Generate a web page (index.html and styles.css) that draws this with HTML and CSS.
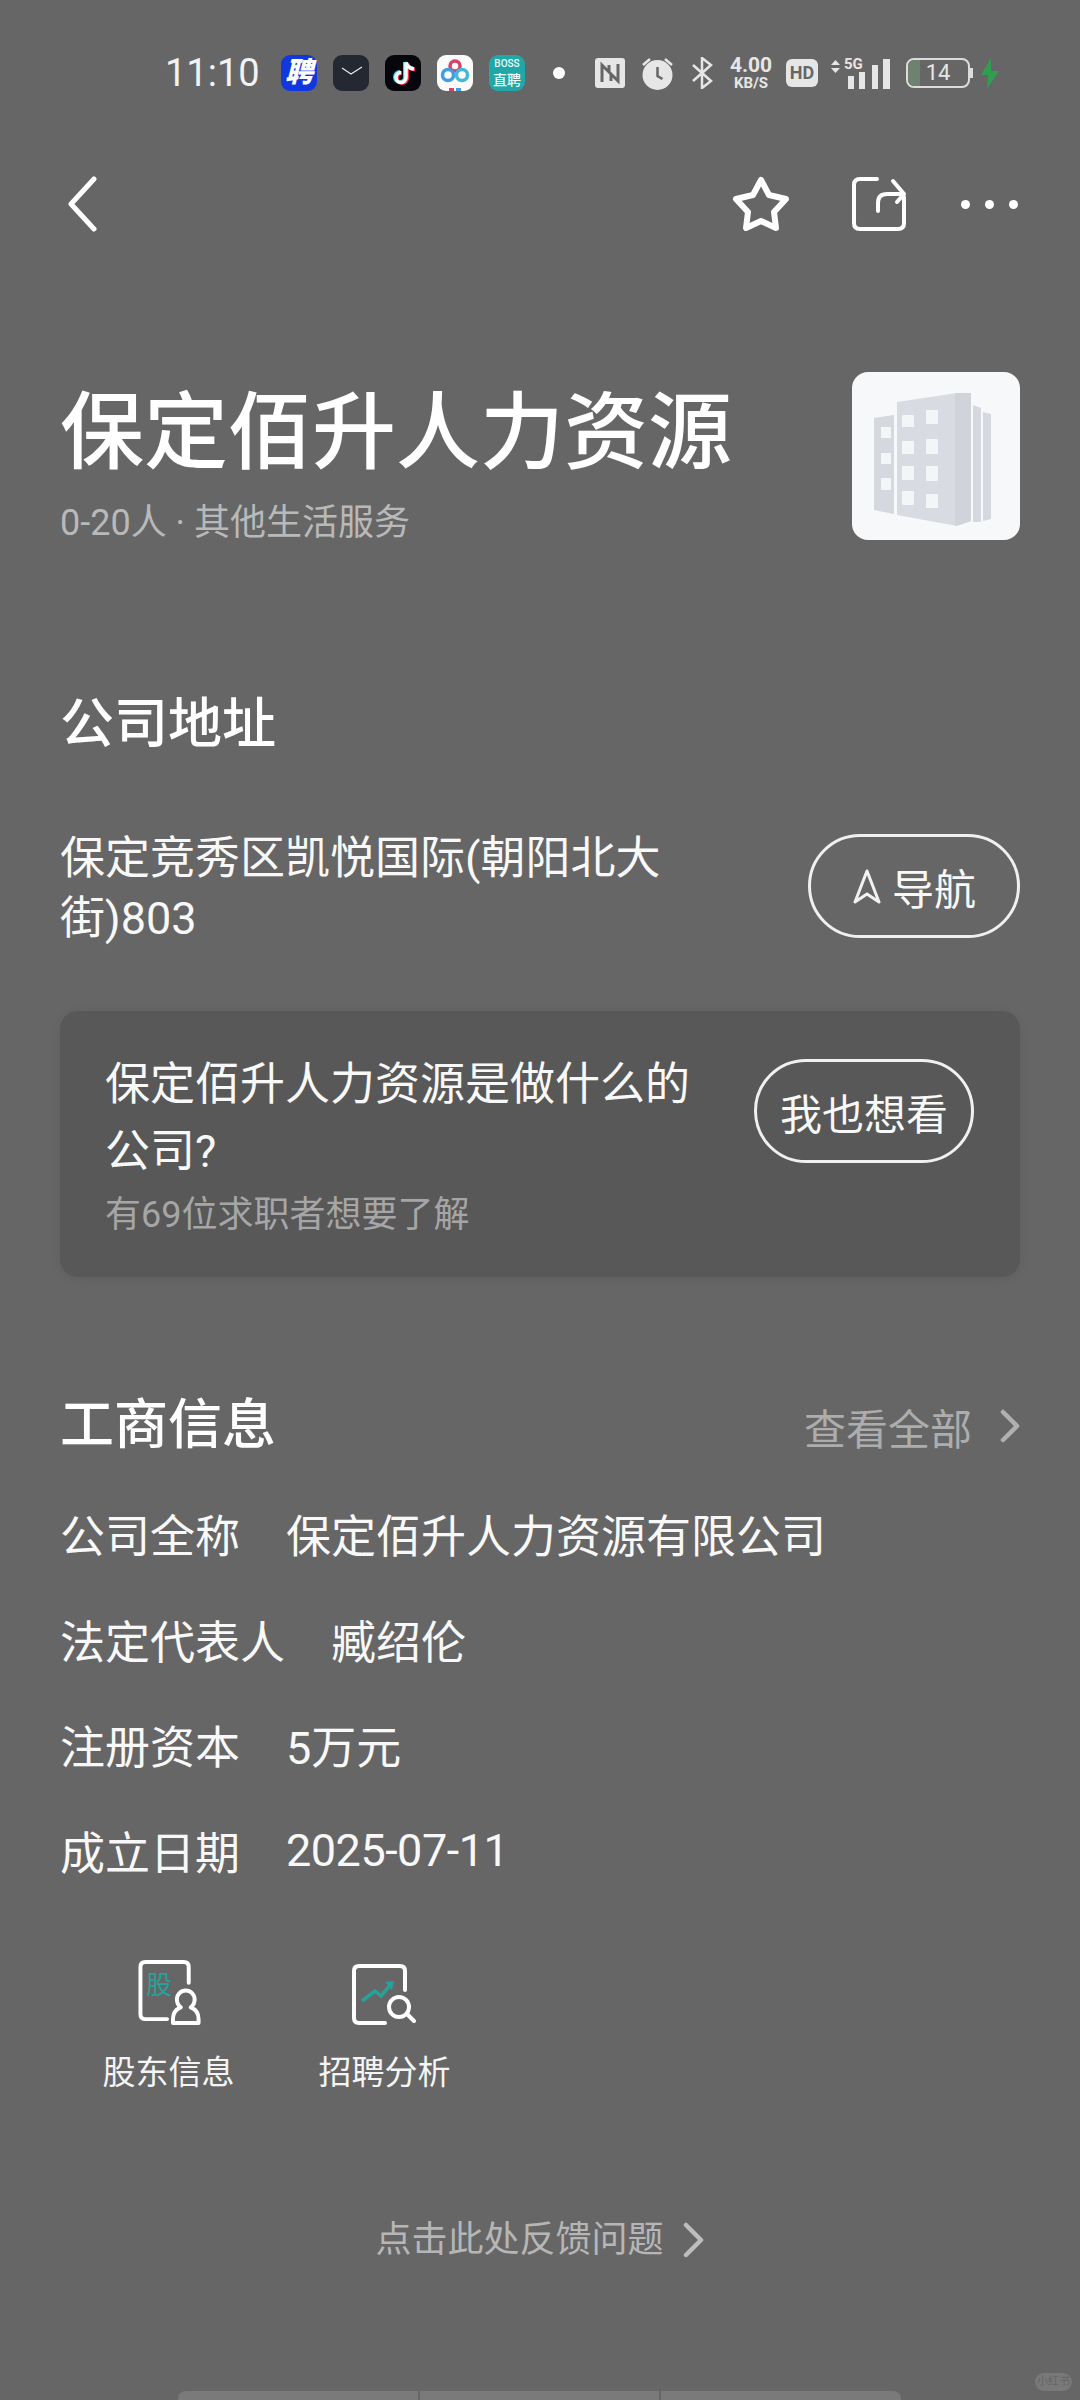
FILE: index.html
```html
<!DOCTYPE html>
<html lang="zh-CN">
<head>
    <meta charset="UTF-8">
    <meta name="viewport" content="width=device-width, initial-scale=1.0">
    <title>保定佰升人力资源</title>
    <link rel="stylesheet" href="styles.css">
</head>
<body>
    <div class="page">
        <div class="status-bar">
            <span class="clock">11:10</span>
            <span class="app app-pin">聘</span>
            <span class="app app-watch">
                <svg viewBox="0 0 36 36" width="36" height="36"><path d="M9 13l9 6 11-7" fill="none" stroke="#e8e8e8" stroke-width="1.2"/></svg>
            </span>
            <span class="app app-tiktok">
                <svg viewBox="0 0 36 36" width="36" height="36">
                    <path d="M20 7v15a5 5 0 1 1-5-5M20 7c1 4 4 6 8 6.500" fill="none" stroke="#25e0e0" stroke-width="4"/>
                    <path d="M22 8v15a5 5 0 1 1-5-5M22 8c1 4 4 6 8 6.500" fill="none" stroke="#f0305a" stroke-width="4"/>
                    <path d="M21 7.500v15a5 5 0 1 1-5-5M21 7.500c1 4 4 6 8 6.500" fill="none" stroke="#fff" stroke-width="3.500"/>
                </svg>
            </span>
            <span class="app app-cloud">
                <svg viewBox="0 0 36 36" width="36" height="36">
                    <circle cx="18" cy="11" r="5" fill="none" stroke="#d9406a" stroke-width="3.500"/>
                    <circle cx="11" cy="20" r="5.500" fill="none" stroke="#3f9de0" stroke-width="3.500"/>
                    <circle cx="25" cy="20" r="5.500" fill="none" stroke="#45b8d8" stroke-width="3.500"/>
                    <rect x="12" y="33" width="5" height="3" fill="#d9406a"/>
                    <rect x="19" y="33" width="5" height="3" fill="#3f9de0"/>
                </svg>
            </span>
            <span class="app app-boss"><b>BOSS</b><b class="boss-cn">直聘</b></span>
            <span class="status-dot"></span>
            <svg class="st-nfc" viewBox="0 0 30 30" width="30" height="30">
                <rect width="30" height="30" rx="3" fill="#e6e6e6"/>
                <path d="M7 24V7l9 9v7M23 6v17l-9-9V7" fill="none" stroke="#666" stroke-width="3"/>
            </svg>
            <svg class="st-alarm" viewBox="0 0 31 33" width="31" height="33">
                <circle cx="15.500" cy="18" r="15" fill="#e6e6e6"/>
                <path d="M15.500 10v9l5 3" fill="none" stroke="#666" stroke-width="2.500"/>
                <path d="M1 8l7-6M30 8l-7-6" stroke="#e6e6e6" stroke-width="2.500"/>
            </svg>
            <svg class="st-bt" viewBox="0 0 21 32" width="21" height="32">
                <path d="M1 8l18 16-9 7V1l9 7L1 24" fill="none" stroke="#e6e6e6" stroke-width="2.500"/>
            </svg>
            <span class="st-speed"><span class="speed-num">4.00</span><span class="speed-unit">KB/S</span></span>
            <span class="st-hd">HD</span>
            <span class="st-signal">
                <svg viewBox="0 0 60 31" width="60" height="31">
                    <path d="M1 7l4.500-5L10 7zM1 10l4.500 5L10 10z" fill="#e6e6e6"/>
                    <rect x="18" y="18" width="6" height="13" fill="#e6e6e6"/>
                    <rect x="29" y="14" width="6" height="17" fill="#e6e6e6"/>
                    <rect x="42" y="7" width="6" height="24" fill="#e6e6e6"/>
                    <rect x="53" y="1" width="7" height="30" fill="#e6e6e6"/>
                </svg>
                <span class="net-label">5G</span>
            </span>
            <span class="st-battery"><span class="battery-level"></span><span class="battery-num">14</span></span>
            <span class="battery-tip"></span>
            <svg class="st-bolt" viewBox="0 0 20 31" width="20" height="31">
                <path d="M11 0L1 17h7l-1 14 12-18h-8z" fill="#2f9e4f"/>
            </svg>
        </div>

        <div class="nav">
            <svg viewBox="0 0 30 56" width="30" height="56">
                <path d="M27 3L4 28l23 25" fill="none" stroke="#fff" stroke-width="5" stroke-linecap="round" stroke-linejoin="round"/>
            </svg>
            <div class="nav-right">
                <svg viewBox="0 0 62 58" width="62" height="58">
                    <path d="M31 5l8 15 17 4-12 13 2 16-15-7-15 7 2-16L6 24l17-4z" fill="none" stroke="#fff" stroke-width="6" stroke-linejoin="round"/>
                </svg>
                <svg class="nav-share" viewBox="0 0 56 56" width="56" height="56">
                    <path d="M26 3H9Q3 3 3 9v38q0 6 6 6h38q6 0 6-6V21" fill="none" stroke="#fff" stroke-width="4" stroke-linecap="round"/>
                    <path d="M27 35v-8q0-9 9-9h16M42 5l11 13-7 8" fill="none" stroke="#fff" stroke-width="4" stroke-linecap="round" stroke-linejoin="round"/>
                </svg>
                <div class="nav-dots"><i></i><i></i><i></i></div>
            </div>
        </div>

        <div class="company-head">
            <div>
                <h1 class="company-name">保定佰升人力资源</h1>
                <div class="company-meta">0-20人 · 其他生活服务</div>
            </div>
            <div class="company-logo">
                <svg viewBox="0 0 168 168" width="168" height="168">
                    <path d="M22 46l20-3v99l-20-4z" fill="#d5d8df"/>
                    <path d="M45 30l60-9h14v128l-14 5-60-11z" fill="#d8dbe2"/>
                    <path d="M103 21h16v128l-16 5z" fill="#d0d3da"/>
                    <path d="M121 33l8 3v114h-8zM131 40l8 2v105l-8 2z" fill="#d5d8df"/>
                    <g fill="#f4f5f7">
                        <rect x="50" y="43" width="12" height="12"/>
                        <rect x="74" y="38" width="12" height="14"/>
                        <rect x="50" y="69" width="12" height="13"/>
                        <rect x="74" y="67" width="12" height="15"/>
                        <rect x="50" y="94" width="12" height="14"/>
                        <rect x="74" y="94" width="12" height="15"/>
                        <rect x="50" y="119" width="12" height="14"/>
                        <rect x="74" y="122" width="12" height="14"/>
                        <rect x="29" y="55" width="10" height="11"/>
                        <rect x="29" y="81" width="10" height="11"/>
                        <rect x="29" y="106" width="10" height="12"/>
                    </g>
                </svg>
            </div>
        </div>

        <h2 class="section-title section-address">公司地址</h2>
        <div class="address-row">
            <div class="address-text">保定竞秀区凯悦国际(朝阳北大街)803</div>
            <div class="pill-btn nav-btn">
                <svg viewBox="0 0 30 37" width="30" height="37">
                    <path d="M15 3l12 31-12-8-12 8z" fill="none" stroke="#f2f2f2" stroke-width="3" stroke-linejoin="round"/>
                </svg>
                导航
            </div>
        </div>

        <div class="ask-card">
            <div class="ask-body">
                <div class="ask-title">保定佰升人力资源是做什么的公司?</div>
                <div class="ask-sub">有69位求职者想要了解</div>
            </div>
            <div class="pill-btn ask-btn">我也想看</div>
        </div>

        <div class="biz-head">
            <h2 class="section-title">工商信息</h2>
            <div class="view-all">
                查看全部
                <svg viewBox="0 0 20 34" width="20" height="34">
                    <path d="M3 3l14 14L3 31" fill="none" stroke="#b0b0b0" stroke-width="4.500" stroke-linecap="round" stroke-linejoin="round"/>
                </svg>
            </div>
        </div>
        <div class="biz-list">
            <div class="biz-row"><span>公司全称</span><span>保定佰升人力资源有限公司</span></div>
            <div class="biz-row"><span>法定代表人</span><span>臧绍伦</span></div>
            <div class="biz-row"><span>注册资本</span><span>5万元</span></div>
            <div class="biz-row"><span>成立日期</span><span class="biz-date">2025-07-11</span></div>
        </div>

        <div class="tools">
            <div class="tool">
                <svg class="tool-icon-left" viewBox="0 0 64 67" width="64" height="67">
                    <path d="M51 23V7q0-5-5-5H7Q2 2 2 7v48q0 5 5 5h22" fill="none" stroke="#fff" stroke-width="4" stroke-linecap="round"/>
                    <text x="8" y="35" class="tool-glyph">股</text>
                    <path d="M35 64v-4q0-9 8-12-4-3-4-8a9 9 0 0 1 18 0q0 5-4 8 8 3 8 12v4z" fill="none" stroke="#fff" stroke-width="4" stroke-linejoin="round"/>
                </svg>
                <span class="tool-label">股东信息</span>
            </div>
            <div class="tool tool-shift">
                <svg viewBox="0 0 64 62" width="64" height="62">
                    <path d="M53 26V7q0-5-5-5H7Q2 2 2 7v47q0 5 5 5h26" fill="none" stroke="#fff" stroke-width="4" stroke-linecap="round"/>
                    <path d="M10 37l13-10 6 5 11-13" fill="none" stroke="#25a39a" stroke-width="3.500"/>
                    <path d="M33 18l9-1-2 9z" fill="#25a39a"/>
                    <circle cx="47" cy="43" r="10" fill="none" stroke="#fff" stroke-width="4"/>
                    <path d="M55 50l7 7" stroke="#fff" stroke-width="4" stroke-linecap="round"/>
                </svg>
                <span class="tool-label">招聘分析</span>
            </div>
        </div>

        <div class="feedback">
            点击此处反馈问题
            <svg viewBox="0 0 22 36" width="22" height="36">
                <path d="M3 3l15 15L3 33" fill="none" stroke="#bdbdbd" stroke-width="4.500" stroke-linecap="round" stroke-linejoin="round"/>
            </svg>
        </div>

        <!-- 底部露出的标签条和水印 -->
        <div class="bottom-tabs"><i></i><i></i><i></i></div>
        <div class="watermark">小红书</div>
    </div>
</body>
</html>
```

FILE: styles.css
```css
* {
    box-sizing: border-box;
}
body {
    margin: 0;
    background: #666666;
    font-family: Roboto, "Noto Sans CJK SC", sans-serif;
    color: #f8f8f8;
}
.page {
    position: relative;
    width: 1080px;
    height: 2400px;
    overflow: hidden;
    padding: 55px 60px 0;
}

/* status bar */
.status-bar {
    display: flex;
    align-items: center;
    height: 36px;
    margin: 0 -60px;
    padding-left: 165px;
    color: #e6e6e6;
}
.clock {
    width: 116px;
    font-size: 38px;
    color: #f2f2f2;
}
.app {
    display: flex;
    flex-direction: column;
    align-items: center;
    justify-content: center;
    width: 36px;
    height: 36px;
    margin-right: 16px;
    border-radius: 9px;
    flex-shrink: 0;
}
.app svg {
    border-radius: 9px;
}
.app-pin {
    background: #1038de;
    color: #fff;
    font-size: 28px;
    font-weight: 900;
    font-style: italic;
    line-height: 36px;
}
.app-watch {
    background: #232832;
}
.app-tiktok {
    background: #05070c;
}
.app-cloud {
    background: #fbfbfb;
}
.app-boss {
    margin-right: 0;
    background: #20a8a8;
    color: #eafafa;
    font-size: 10px;
}
.app-boss b {
    font-weight: 500;
}
.app-boss .boss-cn {
    font-size: 14px;
}
.status-dot {
    width: 12px;
    height: 12px;
    margin-left: 28px;
    border-radius: 50%;
    background: #fff;
}
.st-nfc {
    margin-left: 30px;
}
.st-alarm {
    margin-left: 17px;
}
.st-bt {
    margin-left: 19px;
}
.st-speed {
    display: flex;
    flex-direction: column;
    align-items: center;
    width: 52px;
    margin-left: 12px;
    font-weight: 700;
}
.speed-num {
    font-size: 21px;
    line-height: 19px;
}
.speed-unit {
    font-size: 15px;
    line-height: 16px;
}
.st-hd {
    width: 32px;
    height: 28px;
    margin-left: 9px;
    border-radius: 6px;
    background: #e6e6e6;
    color: #666;
    font-size: 18px;
    font-weight: 700;
    line-height: 28px;
    text-align: center;
}
.st-signal {
    position: relative;
    width: 60px;
    height: 31px;
    margin-left: 12px;
}
.net-label {
    position: absolute;
    left: 14px;
    top: -3px;
    font-size: 15px;
    font-weight: 700;
    line-height: 18px;
}
.st-battery {
    position: relative;
    width: 64px;
    height: 30px;
    margin-left: 16px;
    border: 2px solid #dcdcdc;
    border-radius: 8px;
    text-align: center;
    overflow: hidden;
}
.battery-level {
    position: absolute;
    left: 0;
    top: 0;
    bottom: 0;
    width: 12px;
    background: #6f8270;
}
.battery-num {
    position: relative;
    display: block;
    font-size: 22px;
    line-height: 26px;
}
.battery-tip {
    width: 3px;
    height: 10px;
    background: #dcdcdc;
}
.st-bolt {
    margin-left: 7px;
}

/* top nav */
.nav {
    display: flex;
    justify-content: space-between;
    align-items: center;
    height: 60px;
    margin-top: 83px;
    padding: 0 2px 0 7px;
}
.nav-right {
    display: flex;
    align-items: center;
}
.nav-share {
    margin-left: 59px;
}
.nav-dots {
    display: flex;
    gap: 15px;
    margin-left: 54px;
}
.nav-dots i {
    width: 9px;
    height: 9px;
    border-radius: 50%;
    background: #fff;
}

/* company header */
.company-head {
    display: flex;
    justify-content: space-between;
    margin-top: 138px;
}
.company-name {
    margin: 0;
    padding-top: 4px;
    font-size: 84px;
    font-weight: 500;
    line-height: 116px;
    color: #fff;
}
.company-meta {
    padding-top: 2px;
    font-size: 36px;
    line-height: 58px;
    color: #b9b9b9;
}
.company-logo {
    width: 168px;
    height: 168px;
    border-radius: 16px;
    background: #f7f8f9;
    overflow: hidden;
}

.section-title {
    margin: 0;
    font-size: 54px;
    font-weight: 500;
    line-height: 70px;
    color: #fff;
}
.section-address {
    margin-top: 138px;
}

/* address */
.address-row {
    display: flex;
    justify-content: space-between;
    align-items: center;
    margin-top: 69px;
}
.address-text {
    width: 640px;
    font-size: 45px;
    line-height: 60px;
}
.pill-btn {
    display: flex;
    align-items: center;
    justify-content: center;
    height: 104px;
    border: 3px solid #f0f0f0;
    border-radius: 52px;
    font-size: 42px;
    color: #f8f8f8;
    flex-shrink: 0;
}
.nav-btn {
    gap: 10px;
    width: 212px;
    margin-bottom: 6px;
}

/* ask card */
.ask-card {
    display: flex;
    justify-content: space-between;
    align-items: flex-start;
    height: 266px;
    margin-top: 62px;
    padding: 40px 46px 37px 45px;
    border-radius: 18px;
    background: #585858;
    box-shadow: 0 2px 10px rgba(0, 0, 0, 0.08);
}
.ask-body {
    width: 600px;
}
.ask-title {
    font-size: 45px;
    line-height: 67px;
}
.ask-sub {
    margin-top: 5px;
    font-size: 36px;
    line-height: 50px;
    color: #a6a6a6;
}
.ask-btn {
    width: 220px;
    margin-top: 8px;
}

/* business info */
.biz-head {
    display: flex;
    justify-content: space-between;
    align-items: center;
    margin-top: 114px;
}
.view-all {
    display: flex;
    align-items: center;
    gap: 28px;
    font-size: 42px;
    color: #adadad;
}
.biz-list {
    margin-top: 20px;
}
.biz-row {
    display: flex;
    align-items: center;
    gap: 46px;
    height: 105.500px;
    font-size: 45px;
}
.biz-date {
    letter-spacing: -0.5px;
}

/* tools */
.tools {
    display: flex;
    margin-top: 57px;
}
.tool {
    display: flex;
    flex-direction: column;
    align-items: center;
    justify-content: flex-end;
    width: 217px;
    height: 136px;
}
.tool-shift {
    margin-left: -1px;
}
.tool-shift svg {
    margin-right: 2px;
}
.tool-icon-left {
    margin-left: 2px;
}
.tool-glyph {
    font-size: 26px;
    fill: #25a39a;
}
.tool-label {
    margin-top: 24px;
    font-size: 33px;
    line-height: 46px;
    color: #f4f4f4;
}

/* feedback */
.feedback {
    display: flex;
    justify-content: center;
    align-items: center;
    gap: 19px;
    margin-top: 119px;
    font-size: 36px;
    line-height: 50px;
    color: #b6b6b6;
}

.bottom-tabs {
    position: absolute;
    left: 178px;
    bottom: 0;
    display: flex;
    gap: 2px;
    width: 723px;
    height: 9px;
}
.bottom-tabs i {
    flex: 1;
    background: #7a7a7a;
}
.bottom-tabs i:first-child {
    border-top-left-radius: 8px;
}
.bottom-tabs i:last-child {
    border-top-right-radius: 8px;
}
.watermark {
    position: absolute;
    right: 8px;
    bottom: 9px;
    width: 37px;
    height: 18px;
    border-radius: 9px;
    background: #797979;
    color: #666;
    font-size: 11px;
    line-height: 18px;
    text-align: center;
}
```
